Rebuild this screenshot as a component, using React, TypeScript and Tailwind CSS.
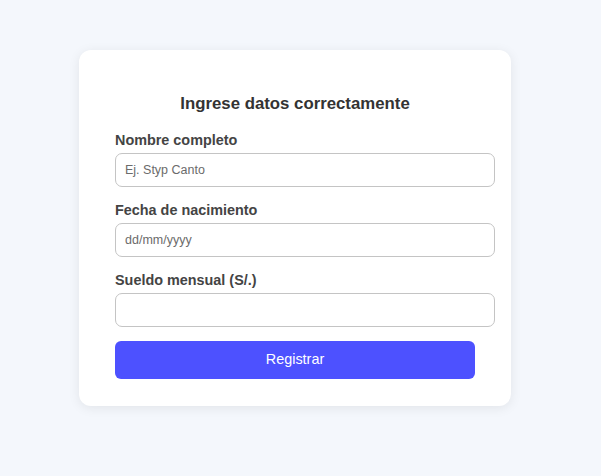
import React from 'react';

const fields = [
  { label: 'Nombre completo', placeholder: 'Ej. Styp Canto' },
  { label: 'Fecha de nacimiento', placeholder: 'dd/mm/yyyy' },
  { label: 'Sueldo mensual (S/.)', placeholder: '' },
];

export default function App() {
  return (
    <div className="min-h-screen w-full bg-[#f4f7fc] pt-[50px] font-['Liberation_Sans',Arial,sans-serif]">
      <form className="ml-[79px] w-[432px] rounded-[12px] bg-white pt-[44px] pb-[27px] px-[36px] shadow-[0_2px_12px_rgba(0,0,0,0.08)]">
        <h2 className="text-center text-[16.8px] leading-[20px] font-bold text-[#333333]">
          Ingrese datos correctamente
        </h2>

        <div className="mt-[18px] flex flex-col gap-[15px]">
          {fields.map((f) => (
            <div key={f.label} className="flex flex-col">
              <label className="text-[14.4px] leading-[17px] font-bold text-[#444444] mb-[4px]">
                {f.label}
              </label>
              <input
                type="text"
                placeholder={f.placeholder}
                className="h-[34px] w-[380px] rounded-[7px] border border-[#c4c4c4] bg-white px-[9px] text-[12.5px] text-[#333] placeholder:text-[#6b6b6b] outline-none"
              />
            </div>
          ))}
        </div>

        <button
          type="button"
          className="mt-[14px] h-[38px] w-full rounded-[6px] bg-[#4d51ff] text-[14.4px] text-white"
        >
          Registrar
        </button>
      </form>
    </div>
  );
}
